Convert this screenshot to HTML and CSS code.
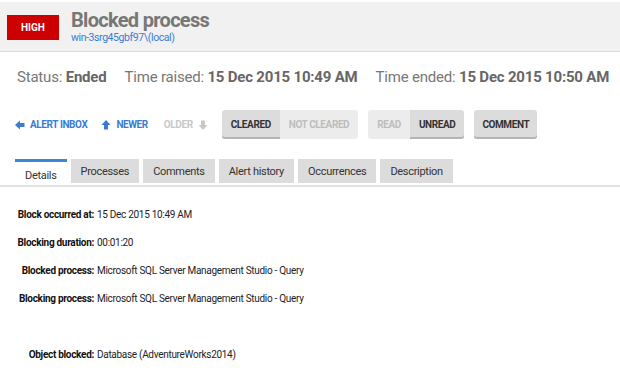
FILE: index.html
```html
<!DOCTYPE html>
<html lang="en">
<head>
    <meta charset="UTF-8">
    <title>Blocked process</title>
    <link rel="stylesheet" href="styles.css">
</head>
<body>
    <div class="alert-header">
        <div class="severity">HIGH</div>
        <div class="alert-title">
            <h1>Blocked process</h1>
            <a href="#" class="server">win-3srg45gbf97\(local)</a>
        </div>
    </div>

    <div class="status-line">
        <span>Status: <b>Ended</b></span>
        <span>Time raised: <b>15 Dec 2015 10:49 AM</b></span>
        <span>Time ended: <b>15 Dec 2015 10:50 AM</b></span>
    </div>

    <div class="actions">
        <a href="#" class="nav-link">
            <svg width="10" height="10" viewBox="0 0 10 10"><path d="M0 5 L5 0.5 V3 H9.5 V7 H5 V9.5 Z" fill="currentColor"/></svg>
            ALERT INBOX
        </a>
        <a href="#" class="nav-link">
            <svg width="10" height="10" viewBox="0 0 10 10"><path d="M5 0 L9.5 5 H7 V9.5 H3 V5 H0.5 Z" fill="currentColor"/></svg>
            NEWER
        </a>
        <span class="nav-link disabled">
            OLDER
            <svg width="10" height="10" viewBox="0 0 10 10"><path d="M5 10 L9.5 5 H7 V0.5 H3 V5 H0.5 Z" fill="currentColor"/></svg>
        </span>

        <div class="btn-group">
            <button class="btn">CLEARED</button>
            <button class="btn off">NOT CLEARED</button>
        </div>
        <div class="btn-group">
            <button class="btn off">READ</button>
            <button class="btn">UNREAD</button>
        </div>
        <button class="btn single">COMMENT</button>
    </div>

    <div class="tabs">
        <div class="tab active">Details</div>
        <div class="tab">Processes</div>
        <div class="tab">Comments</div>
        <div class="tab">Alert history</div>
        <div class="tab">Occurrences</div>
        <div class="tab">Description</div>
    </div>

    <div class="details">
        <div class="label">Block occurred at:</div>
        <div class="value">15 Dec 2015 10:49 AM</div>
        <div class="label">Blocking duration:</div>
        <div class="value">00:01:20</div>
        <div class="label">Blocked process:</div>
        <div class="value">Microsoft SQL Server Management Studio - Query</div>
        <div class="label">Blocking process:</div>
        <div class="value">Microsoft SQL Server Management Studio - Query</div>
        <div class="label"></div>
        <div class="value"></div>
        <div class="label">Object blocked:</div>
        <div class="value">Database (AdventureWorks2014)</div>
    </div>
</body>
</html>
```

FILE: styles.css
```css
body {
    margin: 0;
    font-family: Roboto, "Liberation Sans", sans-serif;
    background-color: white;
    color: #333;
}

.alert-header {
    margin-top: 2px;
    height: 49px;
    background-color: #f1f1f1;
    border-bottom: 1px solid #dcdcdc;
    display: flex;
    align-items: center;
    padding-left: 7px;
}

.severity {
    width: 52px;
    height: 25px;
    margin-top: 2px;
    background-color: #cc0000;
    color: white;
    font-size: 10px;
    font-weight: bold;
    display: flex;
    align-items: center;
    justify-content: center;
}

.alert-title {
    margin-left: 12px;
}

.alert-title h1 {
    margin: 0;
    font-size: 20px;
    line-height: 22px;
    font-weight: bold;
    letter-spacing: -0.7px;
    color: #777;
}

.server {
    display: block;
    font-size: 10.5px;
    line-height: 13px;
    letter-spacing: -0.4px;
    color: #3b7bd4;
    text-decoration: none;
}

.status-line {
    display: flex;
    gap: 18px;
    padding: 16px 15px 0 17px;
    font-size: 15px;
    line-height: 18px;
    letter-spacing: -0.2px;
    white-space: nowrap;
    color: #777;
}

.status-line b {
    color: #666;
}

.actions {
    display: flex;
    align-items: center;
    padding: 24px 15px 0;
    height: 29px;
}

.nav-link {
    display: flex;
    align-items: center;
    gap: 5px;
    font-size: 10px;
    font-weight: bold;
    color: #3b7bd4;
    text-decoration: none;
    margin-right: 14px;
    letter-spacing: -0.4px;
}

.nav-link.disabled {
    color: #c8c8c8;
    margin-left: 2px;
    margin-right: 14px;
}

.btn-group {
    display: flex;
    margin-right: 10px;
}

.btn {
    height: 29px;
    border: none;
    background-color: #dcdcdc;
    box-shadow: inset 0 -2px 0 #b5b5b5;
    font-family: inherit;
    font-size: 10px;
    font-weight: bold;
    letter-spacing: -0.4px;
    color: #333;
    padding: 0 9px;
    border-radius: 3px;
}

.btn-group .btn:first-child {
    border-radius: 3px 0 0 3px;
}

.btn-group .btn:last-child {
    border-radius: 0 3px 3px 0;
}

.btn.off {
    background-color: #ececec;
    box-shadow: none;
    color: #bdbdbd;
}

.btn.single {
    padding: 0 8px;
}

.tabs {
    display: flex;
    gap: 4px;
    margin-top: 20px;
    padding-left: 15px;
    border-bottom: 2px solid #e2e2e2;
}

.tab {
    height: 24px;
    padding: 0 10px;
    background-color: #dcdcdc;
    font-size: 11px;
    line-height: 25px;
    letter-spacing: -0.3px;
    color: #333;
}

.tab.active {
    background-color: white;
    border-top: 3px solid #3a86d6;
    height: 23px;
    line-height: 28px;
    padding: 0 10px;
}

.details {
    display: grid;
    grid-template-columns: 94px auto;
    column-gap: 3px;
    grid-auto-rows: 28px;
    padding-top: 14px;
    font-size: 10px;
    line-height: 28px;
    letter-spacing: -0.3px;
    color: #222;
}

.details .label {
    text-align: right;
    font-weight: bold;
    color: #111;
}
```
